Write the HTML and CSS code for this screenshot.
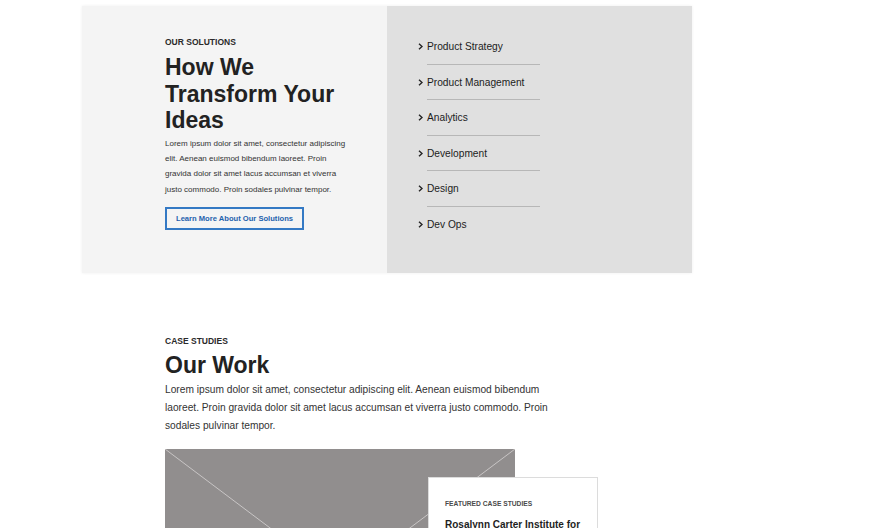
FILE: index.html
```html
<!DOCTYPE html>
<html lang="en">
<head>
<meta charset="utf-8">
<title>Solutions</title>
<link rel="stylesheet" href="styles.css">
</head>
<body>
<section class="solutions">
  <div class="sol-intro">
    <div class="eyebrow">OUR SOLUTIONS</div>
    <h2 class="title">How We Transform Your Ideas</h2>
    <p class="sol-text">Lorem ipsum dolor sit amet, consectetur adipiscing elit. Aenean euismod bibendum laoreet. Proin gravida dolor sit amet lacus accumsan et viverra justo commodo. Proin sodales pulvinar tempor.</p>
    <a class="btn" href="#">Learn More About Our Solutions</a>
  </div>
  <div class="sol-list-wrap">
    <ul class="sol-list">
      <li><span class="chev"><svg width="5" height="7" viewBox="0 0 5 7"><polyline points="1,0.8 4,3.5 1,6.2" fill="none" stroke="#222" stroke-width="1.4"/></svg></span>Product Strategy</li>
      <li><span class="chev"><svg width="5" height="7" viewBox="0 0 5 7"><polyline points="1,0.8 4,3.5 1,6.2" fill="none" stroke="#222" stroke-width="1.4"/></svg></span>Product Management</li>
      <li><span class="chev"><svg width="5" height="7" viewBox="0 0 5 7"><polyline points="1,0.8 4,3.5 1,6.2" fill="none" stroke="#222" stroke-width="1.4"/></svg></span>Analytics</li>
      <li><span class="chev"><svg width="5" height="7" viewBox="0 0 5 7"><polyline points="1,0.8 4,3.5 1,6.2" fill="none" stroke="#222" stroke-width="1.4"/></svg></span>Development</li>
      <li><span class="chev"><svg width="5" height="7" viewBox="0 0 5 7"><polyline points="1,0.8 4,3.5 1,6.2" fill="none" stroke="#222" stroke-width="1.4"/></svg></span>Design</li>
      <li><span class="chev"><svg width="5" height="7" viewBox="0 0 5 7"><polyline points="1,0.8 4,3.5 1,6.2" fill="none" stroke="#222" stroke-width="1.4"/></svg></span>Dev Ops</li>
    </ul>
  </div>
</section>

<section class="work">
  <div class="eyebrow">CASE STUDIES</div>
  <h2 class="title">Our Work</h2>
  <p class="work-text">Lorem ipsum dolor sit amet, consectetur adipiscing elit. Aenean euismod bibendum laoreet. Proin gravida dolor sit amet lacus accumsan et viverra justo commodo. Proin sodales pulvinar tempor.</p>
  <div class="feature">
    <div class="placeholder">
      <svg width="350" height="263" viewBox="0 0 350 263" preserveAspectRatio="none">
        <line x1="0" y1="0" x2="350" y2="263" stroke="#c8c5c5" stroke-width="1"/>
        <line x1="350" y1="0" x2="0" y2="263" stroke="#c8c5c5" stroke-width="1"/>
      </svg>
    </div>
    <div class="card">
      <div class="card-label">FEATURED CASE STUDIES</div>
      <div class="card-title">Rosalynn Carter Institute for Caregivers</div>
    </div>
  </div>
</section>
</body>
</html>
```

FILE: styles.css
```css
html { overflow: hidden; }
body {
  margin: 0;
  background: #ffffff;
  font-family: "Liberation Sans", Arial, sans-serif;
  color: #222;
}

.solutions {
  margin: 6px 0 0 82px;
  width: 610px;
  height: 267px;
  display: grid;
  grid-template-columns: 305px 305px;
  box-shadow: 0 0 3px rgba(0, 0, 0, 0.07);
}

.sol-intro {
  background: #f4f4f4;
  padding: 31px 0 0 83px;
}

.eyebrow {
  font-size: 8.5px;
  line-height: 10px;
  font-weight: 700;
  color: #2a2a2a;
}

.title {
  margin: 7px 0 0;
  font-size: 23px;
  line-height: 26.5px;
  font-weight: 700;
  color: #222;
}

.sol-intro .title { max-width: 190px; }

.sol-text {
  margin: 2.2px 0 0;
  width: 184px;
  font-size: 8px;
  line-height: 15.3px;
  color: #333;
}

.btn {
  display: inline-block;
  margin-top: 10px;
  padding: 5px 9px;
  border: 2px solid #3479c4;
  font-size: 7.6px;
  line-height: 9px;
  font-weight: 700;
  color: #1f62ad;
  text-decoration: none;
}

.sol-list-wrap {
  background: #e0e0e0;
}

.sol-list {
  list-style: none;
  margin: 23px 0 0 40px;
  padding: 0;
  width: 113px;
}

.sol-list li {
  padding: 12px 0 10.5px;
  border-bottom: 1px solid #b7b7b7;
  font-size: 10.2px;
  line-height: 12px;
  color: #1c1c1c;
  white-space: nowrap;
}

.sol-list li:last-child { border-bottom: none; }

.chev {
  display: inline-block;
  width: 9px;
  margin-left: -9px;
}

.chev svg { display: block; }

.work {
  margin: 63px 0 0 165px;
}

.work .title { margin-top: 6.3px; }

.work-text {
  margin: 2.5px 0 0;
  width: 395px;
  font-size: 10.2px;
  line-height: 18px;
  color: #333;
}

.feature {
  position: relative;
  margin-top: 13.7px;
  width: 350px;
}

.placeholder {
  width: 350px;
  height: 263px;
  background: #918e8e;
}

.placeholder svg { display: block; }

.card {
  position: absolute;
  left: 263px;
  top: 28px;
  width: 137px;
  padding: 22px 15px 20px 16px;
  background: #ffffff;
  border: 1px solid #dcdcdc;
}

.card-label {
  font-size: 6.7px;
  line-height: 8px;
  font-weight: 700;
  color: #4a4a4a;
}

.card-title {
  margin-top: 10px;
  font-size: 10px;
  line-height: 13px;
  font-weight: 700;
  color: #1e1e1e;
}
```
